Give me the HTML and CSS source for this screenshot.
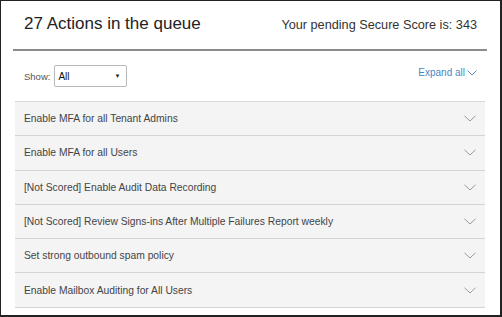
FILE: index.html
```html
<!DOCTYPE html>
<html>
<head>
<meta charset="utf-8">
<link rel="stylesheet" href="styles.css">
</head>
<body>
<div class="frame">
  <header class="head">
    <h1 class="title">27 Actions in the queue</h1>
    <div class="score">Your pending Secure Score is: 343</div>
  </header>
  <div class="toolbar">
    <label class="show">Show:
      <span class="select">All<span class="caret">&#9660;</span></span>
    </label>
    <a class="expand">Expand all<svg width="10" height="6" viewBox="0 0 10 6"><path d="M0.5 0.5 L5 5 L9.5 0.5" fill="none" stroke="#5b8fc9" stroke-width="1"/></svg></a>
  </div>
  <ul class="list">
    <li class="row"><span>Enable MFA for all Tenant Admins</span><svg class="chev" width="12" height="7" viewBox="0 0 12 7"><path d="M0.5 0.8 L6 6 L11.5 0.8" fill="none" stroke="#9a9a9a" stroke-width="1"/></svg></li>
    <li class="row"><span>Enable MFA for all Users</span><svg class="chev" width="12" height="7" viewBox="0 0 12 7"><path d="M0.5 0.8 L6 6 L11.5 0.8" fill="none" stroke="#9a9a9a" stroke-width="1"/></svg></li>
    <li class="row"><span>[Not Scored] Enable Audit Data Recording</span><svg class="chev" width="12" height="7" viewBox="0 0 12 7"><path d="M0.5 0.8 L6 6 L11.5 0.8" fill="none" stroke="#9a9a9a" stroke-width="1"/></svg></li>
    <li class="row"><span>[Not Scored] Review Signs-ins After Multiple Failures Report weekly</span><svg class="chev" width="12" height="7" viewBox="0 0 12 7"><path d="M0.5 0.8 L6 6 L11.5 0.8" fill="none" stroke="#9a9a9a" stroke-width="1"/></svg></li>
    <li class="row"><span>Set strong outbound spam policy</span><svg class="chev" width="12" height="7" viewBox="0 0 12 7"><path d="M0.5 0.8 L6 6 L11.5 0.8" fill="none" stroke="#9a9a9a" stroke-width="1"/></svg></li>
    <li class="row"><span>Enable Mailbox Auditing for All Users</span><svg class="chev" width="12" height="7" viewBox="0 0 12 7"><path d="M0.5 0.8 L6 6 L11.5 0.8" fill="none" stroke="#9a9a9a" stroke-width="1"/></svg></li>
  </ul>
</div>
</body>
</html>
```
FILE: styles.css
```css
html, body {
  margin: 0;
  padding: 0;
  background: #fff;
}
body {
  font-family: "Liberation Sans", Arial, sans-serif;
  width: 502px;
  height: 317px;
  overflow: hidden;
}
.frame {
  box-sizing: border-box;
  width: 502px;
  height: 317px;
  border: 1px solid #222;
  border-right-width: 2px;
  border-bottom-width: 2px;
  padding: 0 13px 0 12px;
  overflow: hidden;
}
.head {
  display: flex;
  justify-content: space-between;
  align-items: baseline;
  padding: 10px 10px 0 11px;
  height: 38px;
  border-bottom: 2px solid #8c8c8c;
}
.title {
  margin: 0;
  font-family: "Liberation Sans Narrow", "Liberation Sans", sans-serif;
  font-weight: normal;
  font-size: 17px;
  color: #222;
  line-height: 26px;
}
.score {
  font-size: 12.7px;
  color: #333;
}
.toolbar {
  display: flex;
  justify-content: space-between;
  align-items: flex-start;
  padding: 13px 10px 0 11px;
  height: 37px;
}
.show {
  font-size: 9.5px;
  color: #555;
  display: flex;
  align-items: center;
  gap: 4px;
  margin-top: 1px;
}
.select {
  box-sizing: border-box;
  width: 73px;
  height: 22px;
  border: 1px solid #b8b8b8;
  border-radius: 2px;
  font-size: 10px;
  color: #111;
  display: flex;
  align-items: center;
  justify-content: space-between;
  padding: 0 6px 0 3px;
}
.caret {
  font-size: 6px;
  color: #222;
}
.expand {
  font-size: 10px;
  color: #4a86c5;
  display: flex;
  align-items: center;
  gap: 2px;
  margin-top: 3px;
}
.list {
  list-style: none;
  margin: 0 2px 0 2px;
  padding: 0;
  border-top: 1px solid #dadada;
}
.row {
  box-sizing: border-box;
  height: 34.3px;
  background: #f4f4f4;
  border-bottom: 1px solid #d4d4d4;
  display: flex;
  align-items: center;
  justify-content: space-between;
  padding: 0 9px 0 9px;
  font-size: 10.3px;
  color: #444;
}
.chev {
  display: block;
}
```
